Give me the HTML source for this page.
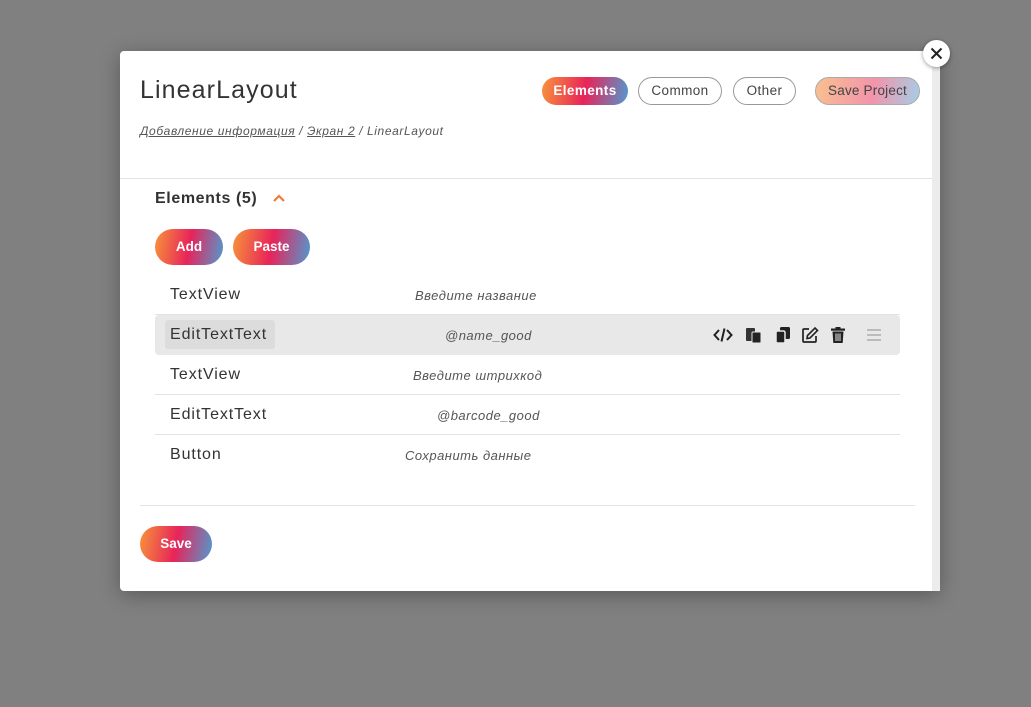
<!DOCTYPE html>
<html><head><meta charset="utf-8"><style>
*{box-sizing:border-box;margin:0;padding:0}
body{width:1031px;height:707px;background:#808080;font-family:"Liberation Sans",sans-serif;position:relative;overflow:hidden;color:#333}
.modal{position:absolute;left:120px;top:51px;width:820px;height:540px;background:#fff;border-radius:4px;box-shadow:0 4px 20px rgba(0,0,0,.3)}
.sb{position:absolute;right:0;top:0;width:8px;height:100%;background:#ececec}
.close{position:absolute;left:923px;top:40px;width:27px;height:27px;border-radius:50%;background:#fff;box-shadow:0 1px 4px rgba(0,0,0,.4)}
.close svg{position:absolute;left:7px;top:7px}
h1{position:absolute;left:20px;top:25px;font-size:25px;font-weight:normal;color:#333;letter-spacing:1.1px}
.bc{position:absolute;left:20px;top:73px;font-size:12px;font-style:italic;color:#555;letter-spacing:0.6px}
.bc u{color:#555}
.pill{position:absolute;top:26px;height:28px;border-radius:14px;font-size:13.5px;line-height:26px;text-align:center;border:1px solid #999;color:#444;letter-spacing:0.4px}
.grad{background:linear-gradient(100deg,#f7943a 0%,#e8245a 50%,#4f9bd0 100%);color:#fff;border:none;font-weight:bold}
.hr{position:absolute;left:0;right:8px;height:1px;background:#e3e3e3}
.sec{position:absolute;left:35px;top:139px;font-size:16px;font-weight:bold;color:#333;letter-spacing:0.6px}
.btn{position:absolute;height:36px;border-radius:18px;line-height:36px;text-align:center;font-size:13.5px}
.row{position:absolute;left:35px;width:745px;height:40px;border-bottom:1px solid #e3e3e3}
.row .n{position:absolute;left:15px;top:11px;font-size:16px;color:#333;letter-spacing:0.9px}
.row .v{position:absolute;top:13px;font-size:13px;font-style:italic;color:#555;letter-spacing:0.5px}
.icons{position:absolute;left:558px;top:11px}
.icons svg{position:absolute;top:0}
</style></head><body>
<div class="modal">
<div class="sb"></div>
<h1>LinearLayout</h1>
<div class="bc"><u>Добавление информация</u> / <u>Экран 2</u> / LinearLayout</div>
<div class="pill grad" style="left:422px;width:86px;line-height:28px">Elements</div>
<div class="pill" style="left:518px;width:84px">Common</div>
<div class="pill" style="left:613px;width:63px">Other</div>
<div class="pill" style="left:695px;width:105px;background:linear-gradient(100deg,#f9c08f,#f294ab 55%,#a5cde6);border-color:#aaa;letter-spacing:0.2px">Save Project</div>
<div class="hr" style="top:127px"></div>
<div class="sec">Elements (5) <svg width="14" height="10" style="margin-left:10px" viewBox="0 0 14 10"><path d="M2 8 L7 3 L12 8" stroke="#f07a3a" stroke-width="2.2" fill="none"/></svg></div>
<div class="btn grad" style="left:35px;top:178px;width:68px">Add</div>
<div class="btn grad" style="left:113px;top:178px;width:77px">Paste</div>
<div class="row" style="top:224px"><span class="n">TextView</span><span class="v" style="left:260px">Введите название</span></div>
<div class="row" style="top:264px;background:#e8e8e8;border-radius:4px;border-bottom:none">
<span style="position:absolute;left:10px;top:5px;width:110px;height:29px;background:#dcdcdc;border-radius:3px"></span>
<span class="n">EditTextText</span><span class="v" style="left:290px">@name_good</span>
<div class="icons">
<svg style="left:0" width="20" height="18" viewBox="0 0 20 18"><path d="M6 4 L1.5 9 L6 14 M14 4 L18.5 9 L14 14 M11.5 2.5 L8.5 15.5" stroke="#222" stroke-width="2" fill="none"/></svg>
<svg style="left:32px" width="18" height="18" viewBox="0 0 18 18"><rect x="1" y="2" width="9" height="13" rx="1" fill="#333"/><rect x="7" y="6" width="9" height="11" rx="1" fill="#222" stroke="#e8e8e8" stroke-width="1"/></svg>
<svg style="left:61px" width="18" height="18" viewBox="0 0 18 18"><rect x="6" y="1" width="10" height="12" rx="1.5" fill="#222"/><rect x="2" y="5" width="9" height="12" rx="1.5" fill="#222" stroke="#e8e8e8" stroke-width="1.5"/></svg>
<svg style="left:88px" width="18" height="18" viewBox="0 0 18 18"><path d="M8 3 H3 Q2 3 2 4 V15 Q2 16 3 16 H14 Q15 16 15 15 V10" stroke="#222" stroke-width="1.7" fill="none"/><path d="M14 2 L16.5 4.5 L9 12 L6 12.5 L6.5 9.5 Z" stroke="#222" stroke-width="1.6" fill="none"/></svg>
<svg style="left:116px" width="18" height="18" viewBox="0 0 18 18"><rect x="2" y="2.5" width="14" height="2.2" fill="#222"/><rect x="6.5" y="1" width="5" height="2" fill="#222"/><path d="M3.5 5.5 H14.5 L13.7 17 H4.3 Z" fill="#222"/><path d="M7 7.5 V15 M9 7.5 V15 M11 7.5 V15" stroke="#e8e8e8" stroke-width="1"/></svg>
<svg style="left:152px" width="18" height="18" viewBox="0 0 18 18"><path d="M2 4 H16 M2 9 H16 M2 14 H16" stroke="#bbb" stroke-width="2"/></svg>
</div></div>
<div class="row" style="top:304px"><span class="n">TextView</span><span class="v" style="left:258px">Введите штрихкод</span></div>
<div class="row" style="top:344px"><span class="n">EditTextText</span><span class="v" style="left:282px">@barcode_good</span></div>
<div class="row" style="top:384px;border-bottom:none"><span class="n">Button</span><span class="v" style="left:250px">Сохранить данные</span></div>
<div class="hr" style="top:454px;left:20px;right:25px"></div>
<div class="btn grad" style="left:20px;top:475px;width:72px">Save</div>
</div>
<div class="close"><svg width="13" height="13" viewBox="0 0 13 13"><path d="M1.5 1.5 L11.5 11.5 M11.5 1.5 L1.5 11.5" stroke="#222" stroke-width="2"/></svg></div>
</body></html>
